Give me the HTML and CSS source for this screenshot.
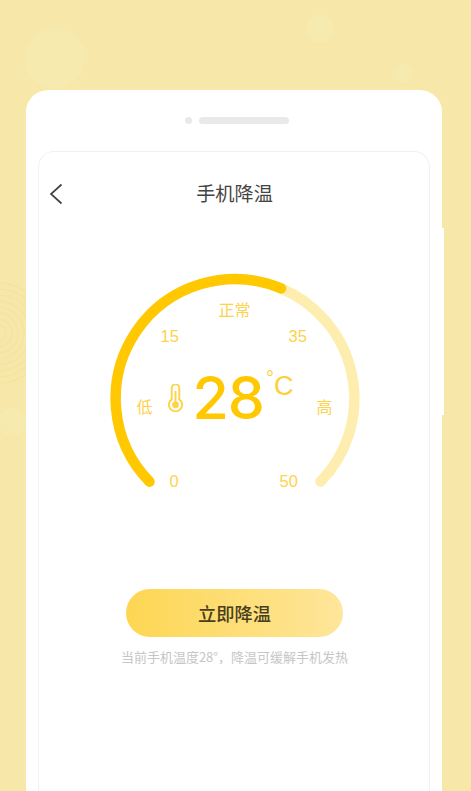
FILE: index.html
```html
<!DOCTYPE html>
<html lang="zh-CN">
<head>
<meta charset="utf-8">
<title>手机降温</title>
<link rel="stylesheet" href="styles.css">
</head>
<body>
<svg class="backdrop" viewBox="0 0 471 791" aria-hidden="true">
  <g class="rings">
    <circle cx="-2" cy="333" r="8"/><circle cx="-2" cy="333" r="14"/><circle cx="-2" cy="333" r="20"/>
    <circle cx="-2" cy="333" r="26"/><circle cx="-2" cy="333" r="32"/><circle cx="-2" cy="333" r="38"/>
    <circle cx="-2" cy="333" r="44"/><circle cx="-2" cy="333" r="50"/>
  </g>
  <g class="spots">
    <circle cx="320" cy="29" r="14"/><circle cx="404" cy="73" r="9"/><circle cx="55" cy="58" r="30"/><circle cx="13" cy="422" r="14"/>
  </g>
</svg>
<main class="phone">
  <span class="side-strip" aria-hidden="true"></span>
  <div class="speaker"><span class="camera"></span><span class="slot"></span></div>
  <section class="screen">
    <header class="topbar">
      <svg class="back" viewBox="0 0 14 22" aria-hidden="true"><path d="M12.5 1.5 2 11l10.5 9.5"/></svg>
      <h1 class="title">手机降温</h1>
    </header>
    <div class="gauge">
      <svg class="dial" viewBox="0 0 260 226" aria-hidden="true">
        <path class="dial-track" d="M176 15.4 A119.3 119.3 0 0 1 215.5 208.7"/>
        <path class="dial-value" d="M44.5 208.7 A119.3 119.3 0 0 1 176 15.4"/>
      </svg>
      <span class="tick tick-normal">正常</span>
      <span class="tick tick-15">15</span>
      <span class="tick tick-35">35</span>
      <span class="tick tick-low">低</span>
      <span class="tick tick-high">高</span>
      <span class="tick tick-0">0</span>
      <span class="tick tick-50">50</span>
      <svg class="thermo" viewBox="0 0 15 28" aria-hidden="true">
        <path class="thermo-shell" d="M3.7 4.2a3.8 3.8 0 0 1 7.6 0V15.4a6.6 6.6 0 1 1-7.6 0Z"/>
        <path class="thermo-line" d="M7.5 7v13"/>
        <circle class="thermo-bulb" cx="7.5" cy="20.8" r="3.4"/>
      </svg>
      <div class="reading"><span class="value">28</span><span class="degree">°</span><span class="unit">C</span></div>
    </div>
    <button class="cool-btn" type="button">立即降温</button>
    <p class="note">当前手机温度28°，降温可缓解手机发热</p>
  </section>
</main>
</body>
</html>
```

FILE: styles.css
```css
* { box-sizing: border-box; }
html, body { margin: 0; height: 100%; }
body {
  position: relative;
  height: 791px;
  overflow: hidden;
  padding: 90px 29px 0 26px;
  background: #f7e8a9;
  font-family: "Noto Sans CJK SC", "Liberation Sans", sans-serif;
}
.backdrop { position: absolute; inset: 0; width: 471px; height: 791px; }
.rings circle { fill: none; stroke: #f5e3a2; stroke-width: 1.5; }
.spots circle { fill: #f9edbb; opacity: .3; }

.phone {
  position: relative;
  height: 701px;
  padding: 0 12px;
  background: #fff;
  border-radius: 22px 22px 0 0;
}
.side-strip {
  position: absolute;
  top: 138px;
  right: -2px;
  width: 2px;
  height: 187px;
  background: #fff;
}
.speaker {
  display: flex;
  justify-content: center;
  align-items: center;
  gap: 7px;
  height: 61px;
  padding-left: 6px;
}
.camera { width: 7px; height: 7px; border-radius: 50%; background: #e9e9e9; }
.slot { width: 90px; height: 7px; border-radius: 4px; background: #e9e9e9; }

.screen {
  display: flex;
  flex-direction: column;
  align-items: center;
  height: 640px;
  border: 1px solid #f1f1f1;
  border-bottom: 0;
  border-radius: 16px 16px 0 0;
}
.topbar {
  position: relative;
  display: flex;
  justify-content: center;
  align-items: center;
  width: 100%;
  height: 84px;
}
.back {
  position: absolute;
  left: 10px;
  top: 31px;
  width: 14px;
  height: 22px;
  fill: none;
  stroke: #444;
  stroke-width: 1.7;
}
.title {
  margin: 0 0 2px 1px;
  font-size: 19.2px;
  font-weight: 400;
  line-height: 28px;
  color: #444;
}

.gauge {
  position: relative;
  flex: none;
  width: 260px;
  height: 226px;
  margin-top: 37px;
  margin-left: 1px;
}
.dial { display: block; width: 260px; height: 226px; overflow: visible; }
.dial-track, .dial-value { fill: none; stroke-linecap: round; stroke-width: 10.5; }
.dial-track { stroke: #fdeeb0; }
.dial-value { stroke: #ffc800; }

.tick {
  position: absolute;
  font-size: 16.5px;
  line-height: 20px;
  color: #fdd34a;
  white-space: nowrap;
  font-family: "Liberation Sans", "Noto Sans CJK SC", sans-serif;
}
.tick-normal { left: 114px; top: 28px; font-size: 16px; }
.tick-15 { left: 56px; top: 53px; }
.tick-35 { left: 184px; top: 53px; }
.tick-low { left: 32px; top: 125px; font-size: 16px; }
.tick-high { left: 212px; top: 125px; font-size: 16px; }
.tick-0 { left: 65px; top: 198px; }
.tick-50 { left: 175px; top: 198px; }

.thermo { position: absolute; left: 63px; top: 111px; width: 15px; height: 28px; fill: none; }
.thermo-shell { stroke: #fdd34a; stroke-width: 1.9; }
.thermo-line { stroke: #fdd34a; stroke-width: 2; }
.thermo-bulb { fill: #fdd34a; }

.reading {
  position: absolute;
  left: 88px;
  top: 91px;
  display: flex;
  align-items: flex-start;
  font-family: "Inter", "Liberation Sans", sans-serif;
  color: #ffc800;
}
.value { font-size: 59px; font-weight: 500; line-height: 68px; letter-spacing: -1px; }
.degree { margin: 2px 0 0 2px; font-size: 20px; line-height: 24px; font-family: "Liberation Sans", sans-serif; color: #fcd03c; }
.unit { margin: 7px 0 0 0; font-size: 27px; line-height: 30px; font-family: "Liberation Sans", sans-serif; color: #fcd03c; }

.cool-btn {
  flex: none;
  width: 217px;
  height: 48px;
  margin-top: 90px;
  margin-left: 1px;
  border: 0;
  border-radius: 24px;
  background: linear-gradient(90deg, #fdd652, #fee69b);
  font-family: inherit;
  font-size: 18.3px;
  font-weight: 500;
  color: #4a3f1c;
}
.note {
  margin: 11px 0 0 1px;
  font-size: 13px;
  line-height: 18px;
  color: #c6c6c6;
  white-space: nowrap;
}
```
